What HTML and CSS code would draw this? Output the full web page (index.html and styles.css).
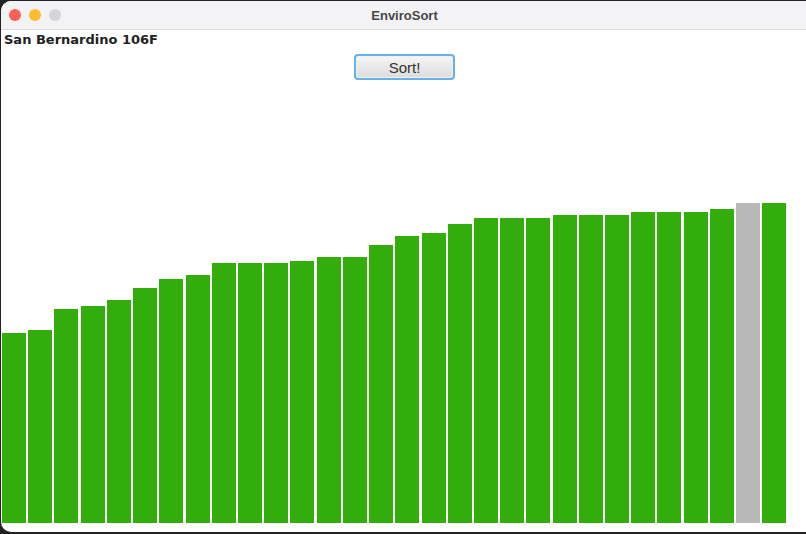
FILE: index.html
```html
<!DOCTYPE html>
<html>
<head>
<meta charset="utf-8">
<title>EnviroSort</title>
<link rel="stylesheet" href="styles.css">
</head>
<body>
<div class="window">
  <div class="titlebar">
    <div class="lights">
      <span class="light red"></span>
      <span class="light yellow"></span>
      <span class="light gray"></span>
    </div>
    <div class="title">EnviroSort</div>
    <div></div>
  </div>
  <div class="label">San Bernardino 106F</div>
  <div class="toolbar"><button class="btn">Sort!</button></div>
  <div class="chart">
    <div class="bar" style="height:190px"></div>
    <div class="bar" style="height:193px"></div>
    <div class="bar" style="height:214px"></div>
    <div class="bar" style="height:217px"></div>
    <div class="bar" style="height:223px"></div>
    <div class="bar" style="height:235px"></div>
    <div class="bar" style="height:244px"></div>
    <div class="bar" style="height:248px"></div>
    <div class="bar" style="height:260px"></div>
    <div class="bar" style="height:260px"></div>
    <div class="bar" style="height:260px"></div>
    <div class="bar" style="height:262px"></div>
    <div class="bar" style="height:266px"></div>
    <div class="bar" style="height:266px"></div>
    <div class="bar" style="height:278px"></div>
    <div class="bar" style="height:287px"></div>
    <div class="bar" style="height:290px"></div>
    <div class="bar" style="height:299px"></div>
    <div class="bar" style="height:305px"></div>
    <div class="bar" style="height:305px"></div>
    <div class="bar" style="height:305px"></div>
    <div class="bar" style="height:308px"></div>
    <div class="bar" style="height:308px"></div>
    <div class="bar" style="height:308px"></div>
    <div class="bar" style="height:311px"></div>
    <div class="bar" style="height:311px"></div>
    <div class="bar" style="height:311px"></div>
    <div class="bar" style="height:314px"></div>
    <div class="bar active" style="height:320px"></div>
    <div class="bar" style="height:320px"></div>
  </div>
</div>
</body>
</html>
```

FILE: styles.css
```css
html, body {
  margin: 0;
  padding: 0;
}

html {
  overflow: hidden;
  background: #222222;
}

body {
  width: 806px;
  height: 534px;
  overflow: hidden;
}

.window {
  margin: 1px 0 0 1px;
  width: 812px;
  height: 531px;
  border-radius: 10px 0 0 10px;
  background: #ffffff;
  overflow: hidden;
  display: flex;
  flex-direction: column;
}

.titlebar {
  flex: none;
  width: 807px;
  height: 28px;
  background: #f3f3f5;
  border-bottom: 1px solid #dcdcdc;
  display: grid;
  grid-template-columns: 1fr auto 1fr;
  align-items: center;
}

.lights {
  display: flex;
  gap: 8px;
  padding-left: 8px;
}

.light {
  width: 12px;
  height: 12px;
  border-radius: 50%;
  display: block;
}

.light.red { background: #fe5f57; }
.light.yellow { background: #febc2e; }
.light.gray { background: #d5d5d7; }

.title {
  font-family: "Liberation Sans", Arial, sans-serif;
  font-weight: bold;
  font-size: 13px;
  color: #474747;
}

.label {
  flex: none;
  font-family: "DejaVu Sans", Verdana, sans-serif;
  font-weight: bold;
  font-size: 13px;
  line-height: 16px;
  height: 16px;
  padding: 2px 0 0 3px;
  color: #222222;
}

.toolbar {
  flex: none;
  width: 807px;
  margin-top: 6px;
  display: flex;
  justify-content: center;
}

.btn {
  box-sizing: border-box;
  width: 101px;
  height: 26px;
  margin: 0;
  padding: 0;
  border: 2px solid #6ab0e3;
  border-radius: 4px;
  background: linear-gradient(#f6f6f6, #dcdcdc);
  box-shadow: inset 0 0 0 1px #e9f2f9;
  font-family: "Liberation Sans", Arial, sans-serif;
  font-size: 15px;
  color: #333333;
}

.chart {
  flex: none;
  height: 443px;
  display: flex;
  align-items: flex-end;
  gap: 2.23px;
  padding-left: 1px;
}

.bar {
  flex: none;
  width: 24px;
  background: #33ad0b;
}

.bar.active {
  background: #b8b8b8;
}
```
